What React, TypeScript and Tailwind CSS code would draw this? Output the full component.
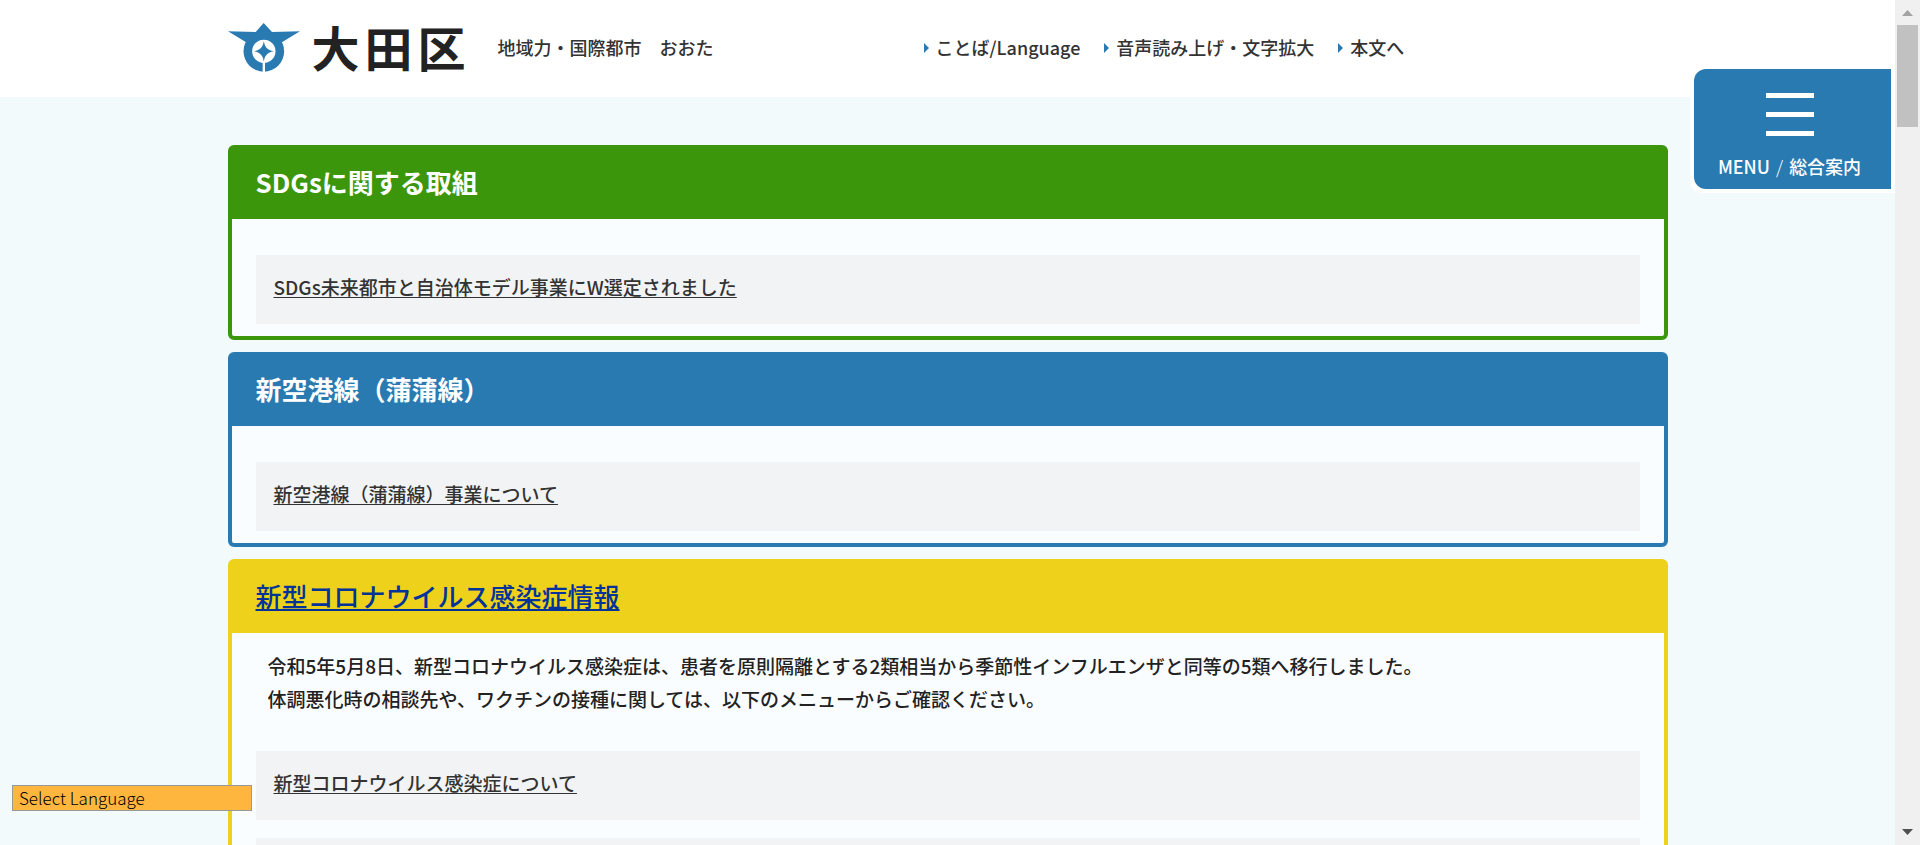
import type { ReactNode } from "react";

const navItems = ["ことば/Language", "音声読み上げ・文字拡大", "本文へ"];

function Emblem() {
  return (
    <svg viewBox="24 41 216 147" className="h-[49px] w-[72px] shrink-0" aria-hidden="true">
      <path d="M24 66 L107 68 L131 41 L156 68 L240 66 L187 98 L131 110 L77 98 Z" fill="#2a7ab2" />
      <circle cx="131.500" cy="126" r="61" fill="#2a7ab2" />
      <circle cx="131.500" cy="126" r="35" fill="#fff" />
      <path
        d="M131.500 95 C134 113 142 122 161 126 C142 130 134 139 131.500 157 C129 139 121 130 102 126 C121 122 129 113 131.500 95 Z"
        fill="#2a7ab2"
      />
      <path d="M128 159 H135 V190 H128 Z" fill="#fff" />
    </svg>
  );
}

function LinkRow({ children }: { children?: ReactNode }) {
  return (
    <li className="flex h-[69px] items-center bg-[#f2f3f5] px-[18px] pb-[6px]">
      {children && (
        <a href="#detail" className="text-[19px] leading-[30px] font-medium text-[#333] underline underline-offset-2">
          {children}
        </a>
      )}
    </li>
  );
}

function Card({
  tone,
  title,
  lead,
  children,
}: {
  tone: string;
  title: ReactNode;
  lead?: ReactNode;
  children: ReactNode;
}) {
  return (
    <section className={`overflow-hidden rounded-md border-4 ${tone}`}>
      <h2 className="flex h-[70px] items-center px-6 pb-[6px] text-[26px]">{title}</h2>
      <div className="bg-[#fafdff] px-6 pb-3">
        {lead}
        <ul className="flex flex-col gap-[18px] pt-9">{children}</ul>
      </div>
    </section>
  );
}

export default function App() {
  return (
    <div className="flex h-screen overflow-hidden bg-[#f2fafc] font-['Noto_Sans_CJK_JP','Noto_Sans',sans-serif] text-[#222]">
      <div className="min-w-0 flex-1 overflow-hidden">
        <header className="bg-white">
          <div className="mx-auto flex h-[97px] max-w-[1440px] items-center pb-[2px]">
            <div className="flex w-[696px] items-center">
              <a href="#home" className="flex items-center gap-3">
                <Emblem />
                <span className="flex gap-[5px] pb-1 text-[48px] leading-[52px] font-bold">
                  <span>大</span>
                  <span>田</span>
                  <span>区</span>
                </span>
              </a>
              <p className="pl-8 text-[18px] font-medium text-[#333]">地域力・国際都市　おおた</p>
            </div>
            <nav>
              <ul className="flex gap-6">
                {navItems.map((item) => (
                  <li key={item}>
                    <a href="#nav" className="flex items-center gap-[7px] text-[18px] font-medium text-[#333]">
                      <svg viewBox="0 0 5 10" className="h-[10px] w-[5px]" aria-hidden="true">
                        <path d="M0 0 L5 5 L0 10 Z" fill="#2a7ab2" />
                      </svg>
                      {item}
                    </a>
                  </li>
                ))}
              </ul>
            </nav>
          </div>
        </header>

        <main className="mx-auto flex max-w-[1440px] flex-col gap-3 pt-12">
          <Card
            tone="border-[#3b960c] bg-[#3b960c]"
            title={<span className="font-bold text-white">SDGsに関する取組</span>}
          >
            <LinkRow>SDGs未来都市と自治体モデル事業にW選定されました</LinkRow>
          </Card>
          <Card
            tone="border-[#2a7ab2] bg-[#2a7ab2]"
            title={<span className="font-bold text-white">新空港線（蒲蒲線）</span>}
          >
            <LinkRow>新空港線（蒲蒲線）事業について</LinkRow>
          </Card>
          <Card
            tone="border-[#eed11a] bg-[#eed11a]"
            title={
              <a href="#covid" className="font-medium text-[#039] underline decoration-2 underline-offset-2">
                新型コロナウイルス感染症情報
              </a>
            }
            lead={
              <p className="px-3 pt-4 text-[19px] leading-[33px] font-medium">
                令和5年5月8日、新型コロナウイルス感染症は、患者を原則隔離とする2類相当から季節性インフルエンザと同等の5類へ移行しました。
                <br />
                体調悪化時の相談先や、ワクチンの接種に関しては、以下のメニューからご確認ください。
              </p>
            }
          >
            <LinkRow>新型コロナウイルス感染症について</LinkRow>
            <LinkRow />
          </Card>
        </main>
      </div>

      <div className="flex w-[25px] shrink-0 flex-col items-center bg-[#f0f0f0]" aria-hidden="true">
        <svg viewBox="0 0 25 25" className="size-[25px]">
          <path d="M7 16 L12.500 10 L18 16 Z" fill="#a3a3a3" />
        </svg>
        <div className="h-[102px] w-[21px] bg-[#c1c1c1]" />
        <svg viewBox="0 0 25 25" className="mt-auto size-[25px]">
          <path d="M7 9 L12.500 15 L18 9 Z" fill="#505050" />
        </svg>
      </div>

      <div className="fixed top-[69px] right-[25px] rounded-bl-xl bg-white pr-1 pb-1 pl-1">
        <button
          type="button"
          className="flex h-[120px] w-[197px] flex-col items-center rounded-l-xl bg-[#2a7ab2] pt-6 pr-[6px] text-white"
        >
          <svg viewBox="0 0 48 43" className="h-[43px] w-12" aria-hidden="true">
            <path d="M0 0 H48 V5 H0 Z M0 19 H48 V24 H0 Z M0 38 H48 V43 H0 Z" fill="#fff" />
          </svg>
          <span className="mt-4 flex gap-[6px] text-[18px] leading-7 font-medium">
            <span>MENU</span>
            <span className="font-light">/</span>
            <span>総合案内</span>
          </span>
        </button>
      </div>

      <select
        aria-label="Select Language"
        className="fixed bottom-[34px] left-3 h-[26px] w-60 appearance-none rounded-none border border-[#999] bg-[#ffb63e] px-[6px] text-[17px] leading-6 font-light text-black"
      >
        <option>Select Language</option>
      </select>
    </div>
  );
}
